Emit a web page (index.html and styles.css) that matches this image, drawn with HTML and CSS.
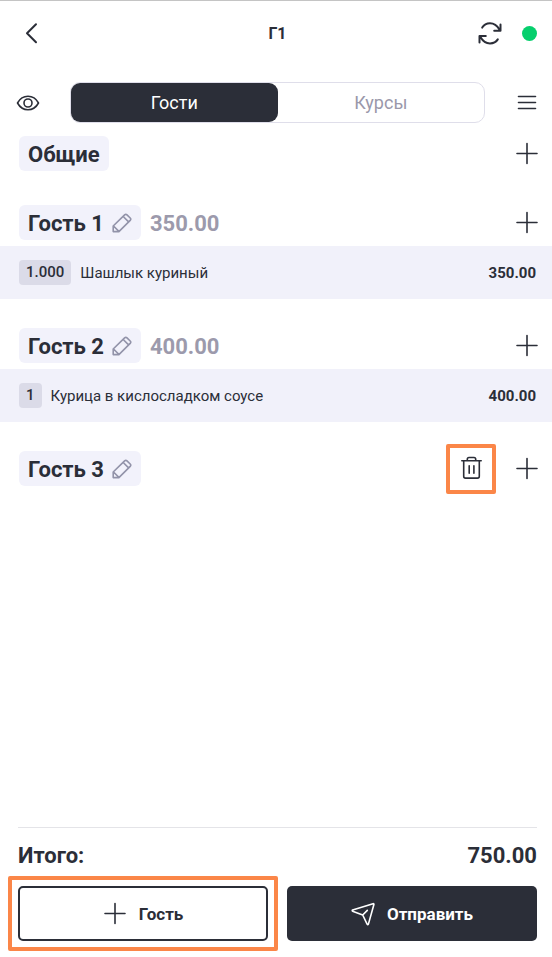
FILE: index.html
```html
<!DOCTYPE html>
<html lang="ru">
<head>
<meta charset="utf-8">
<meta name="viewport" content="width=device-width, initial-scale=1">
<title>Г1</title>
<link rel="stylesheet" href="styles.css">
</head>
<body>
<svg class="defs" aria-hidden="true">
  <symbol id="plus" viewBox="0 0 24 24"><path d="M12 1.500v20M2 11.500h20"/></symbol>
  <symbol id="pencil" viewBox="0 0 20 20"><path d="M1.200 18.600V13L12.600 1.900q1.200-1.100 2.400 0l3.200 3.100q1.100 1.200 0 2.400L6.900 18.600zM11.200 3.500l5.400 5.400M1.500 13l5.400 5.400"/></symbol>
</svg>
<div class="app">
  <header class="header">
    <button class="icon-button" aria-label="Назад"><svg class="icon" viewBox="0 0 24 24"><path class="thick" d="M18 3.200L9 12.200l9 9"/></svg></button>
    <h1 class="title">Г1</h1>
    <div class="status">
      <button class="icon-button" aria-label="Обновить"><svg class="icon" viewBox="0 0 24 24"><path class="thick" d="M4.200 6.600C6 3.600 8.700 2.300 12 2.300c4 0 7 2 9.400 6.200M22.500 3.500v6.300h-6.300M19.800 18.400c-1.800 2.800-4.600 4-7.800 4-4 0-7-2-9.400-6.200M1.500 21.400v-6.300h6.300"/></svg></button>
      <span class="online"></span>
    </div>
  </header>

  <nav class="toolbar">
    <button class="icon-button" aria-label="Просмотр"><svg class="icon" viewBox="0 0 24 24"><path d="M1.500 12C4 7.500 7.500 5.300 12 5.300S20 7.500 22.500 12C20 16.500 16.500 18.700 12 18.700S4 16.500 1.500 12z"/><circle cx="12" cy="12" r="4"/></svg></button>
    <div class="tabs">
      <button class="tab active">Гости</button>
      <button class="tab">Курсы</button>
    </div>
    <button class="icon-button" aria-label="Меню"><svg class="icon" viewBox="0 0 24 24"><path d="M3.500 5.500h17M3.500 11.500h17M3.500 17.500h17"/></svg></button>
  </nav>

  <main class="guests">
    <section class="guest common">
      <div class="guest-head">
        <h2 class="name">Общие</h2>
        <div class="actions"><button class="icon-button" aria-label="Добавить"><svg class="icon"><use href="#plus"/></svg></button></div>
      </div>
    </section>
    <section class="guest">
      <div class="guest-head">
        <button class="name">Гость 1 <svg class="pencil"><use href="#pencil"/></svg></button>
        <span class="sum">350.00</span>
        <div class="actions"><button class="icon-button" aria-label="Добавить"><svg class="icon"><use href="#plus"/></svg></button></div>
      </div>
      <div class="item"><span class="count">1.000</span><span>Шашлык куриный</span><span class="price">350.00</span></div>
    </section>
    <section class="guest">
      <div class="guest-head">
        <button class="name">Гость 2 <svg class="pencil"><use href="#pencil"/></svg></button>
        <span class="sum">400.00</span>
        <div class="actions"><button class="icon-button" aria-label="Добавить"><svg class="icon"><use href="#plus"/></svg></button></div>
      </div>
      <div class="item"><span class="count">1</span><span>Курица в кислосладком соусе</span><span class="price">400.00</span></div>
    </section>
    <section class="guest">
      <div class="guest-head">
        <button class="name">Гость 3 <svg class="pencil"><use href="#pencil"/></svg></button>
        <div class="actions">
          <button class="icon-button marked" aria-label="Удалить"><svg class="icon" viewBox="0 0 24 24"><path d="M2.800 3.700h19.400M4.700 3.700v15.600q0 1.800 1.800 1.800h12q1.800 0 1.800-1.800V3.700M8.300 3.700V2.200Q8.300.5 10 .5h5q1.700 0 1.700 1.700v1.500M10.200 8.700v7.500M14.900 8.700v7.500"/></svg></button>
          <button class="icon-button" aria-label="Добавить"><svg class="icon"><use href="#plus"/></svg></button>
        </div>
      </div>
    </section>
  </main>

  <footer class="footer">
    <div class="total"><span>Итого:</span><span>750.00</span></div>
    <div class="buttons">
      <button class="button outlined marked"><svg class="icon"><use href="#plus"/></svg>Гость</button>
      <button class="button filled"><svg class="icon" viewBox="0 0 24 24"><path d="M1.600 8L22 1.700q1-.2.9.8L17.400 22.100q-.6 1-1.300 0L11.700 13 1.600 9.200q-.8-.7 0-1.200zM11.700 13l4.600-4.600"/></svg>Отправить</button>
    </div>
  </footer>
</div>
</body>
</html>
```
FILE: styles.css
```css
* { box-sizing: border-box; }

body {
  margin: 0;
  background: #fff;
  color: #2b2e38;
  font-family: Roboto, "Liberation Sans", sans-serif;
}

button {
  margin: 0;
  padding: 0;
  border: 0;
  background: none;
  color: inherit;
  font: inherit;
  cursor: pointer;
}

h1, h2 { margin: 0; }

.defs { display: none; }

.app {
  display: flex;
  flex-direction: column;
  min-height: 100vh;
  border-top: 1px solid #c4c4c4;
}

.icon, .pencil {
  display: block;
  flex: none;
  width: 24px;
  height: 24px;
  overflow: visible;
  fill: none;
  stroke: currentColor;
  stroke-width: 1.6;
  stroke-linecap: round;
  stroke-linejoin: round;
}

.thick { stroke-width: 2; }

.icon-button { flex: none; width: 24px; height: 24px; }

.header {
  display: grid;
  grid-template-columns: 1fr auto 1fr;
  align-items: center;
  height: 64px;
  padding: 0 15px 0 18px;
}

.title { font-size: 16px; font-weight: 700; }

.status {
  display: flex;
  align-items: center;
  justify-content: flex-end;
  gap: 20px;
}

.online {
  width: 15px;
  height: 15px;
  border-radius: 50%;
  background: #06cf6d;
}

.toolbar {
  display: flex;
  align-items: center;
  justify-content: space-between;
  gap: 30px;
  margin-top: 17px;
  padding: 0 13px 0 16px;
}

.tabs {
  display: flex;
  flex: 1;
  height: 41px;
  border: 1px solid #dfdeea;
  border-radius: 10px;
}

.tab {
  flex: 1;
  border-radius: 9px;
  color: #9a98aa;
  font-size: 18px;
}

.tab.active { background: #2b2e38; color: #fff; }

.guests { flex: 1; padding-top: 13px; }

.guest { margin-bottom: 29px; }

.guest.common { margin-bottom: 28px; }

.guest-head {
  display: flex;
  align-items: center;
  gap: 9px;
  padding: 0 13px 6px 19px;
}

.name, .sum {
  display: flex;
  align-items: center;
  height: 35px;
  padding-top: 2px;
  font-size: 22px;
  font-weight: 700;
}

.name {
  gap: 8px;
  padding-right: 9px;
  padding-left: 9px;
  border-radius: 6px;
  background: #f2f2fb;
}

.pencil { width: 20px; height: 20px; margin-bottom: 2px; color: #9293a9; }

.sum { color: #9c9aac; }

.actions { display: flex; gap: 32px; margin-left: auto; }

.item {
  display: flex;
  align-items: center;
  gap: 9px;
  height: 53px;
  padding: 0 16px 0 19px;
  background: #f1f1fa;
  font-size: 15px;
}

.count {
  padding: 0 7px;
  border-radius: 4px;
  background: #dbdbe8;
  font-weight: 500;
  line-height: 25px;
}

.price { margin-left: auto; font-weight: 700; }

.marked { position: relative; }

.marked::after {
  content: "";
  position: absolute;
  inset: -13px;
  border: 4px solid #fb8648;
  border-radius: 2px;
}

.footer { padding: 0 15px 16px 18px; }

.total {
  display: flex;
  align-items: center;
  justify-content: space-between;
  height: 59px;
  padding-bottom: 3px;
  border-top: 1px solid #e4e4e8;
  font-size: 22px;
  font-weight: 700;
}

.buttons {
  display: grid;
  grid-template-columns: 1fr 1fr;
  gap: 19px;
}

.button {
  display: flex;
  align-items: center;
  justify-content: center;
  gap: 12px;
  height: 55px;
  border-radius: 5px;
  font-size: 17px;
  font-weight: 700;
}

.outlined { border: 2px solid #2b2e38; }

.outlined::after { inset: -12px; }

.filled { background: #2b2e38; color: #fff; }
```
